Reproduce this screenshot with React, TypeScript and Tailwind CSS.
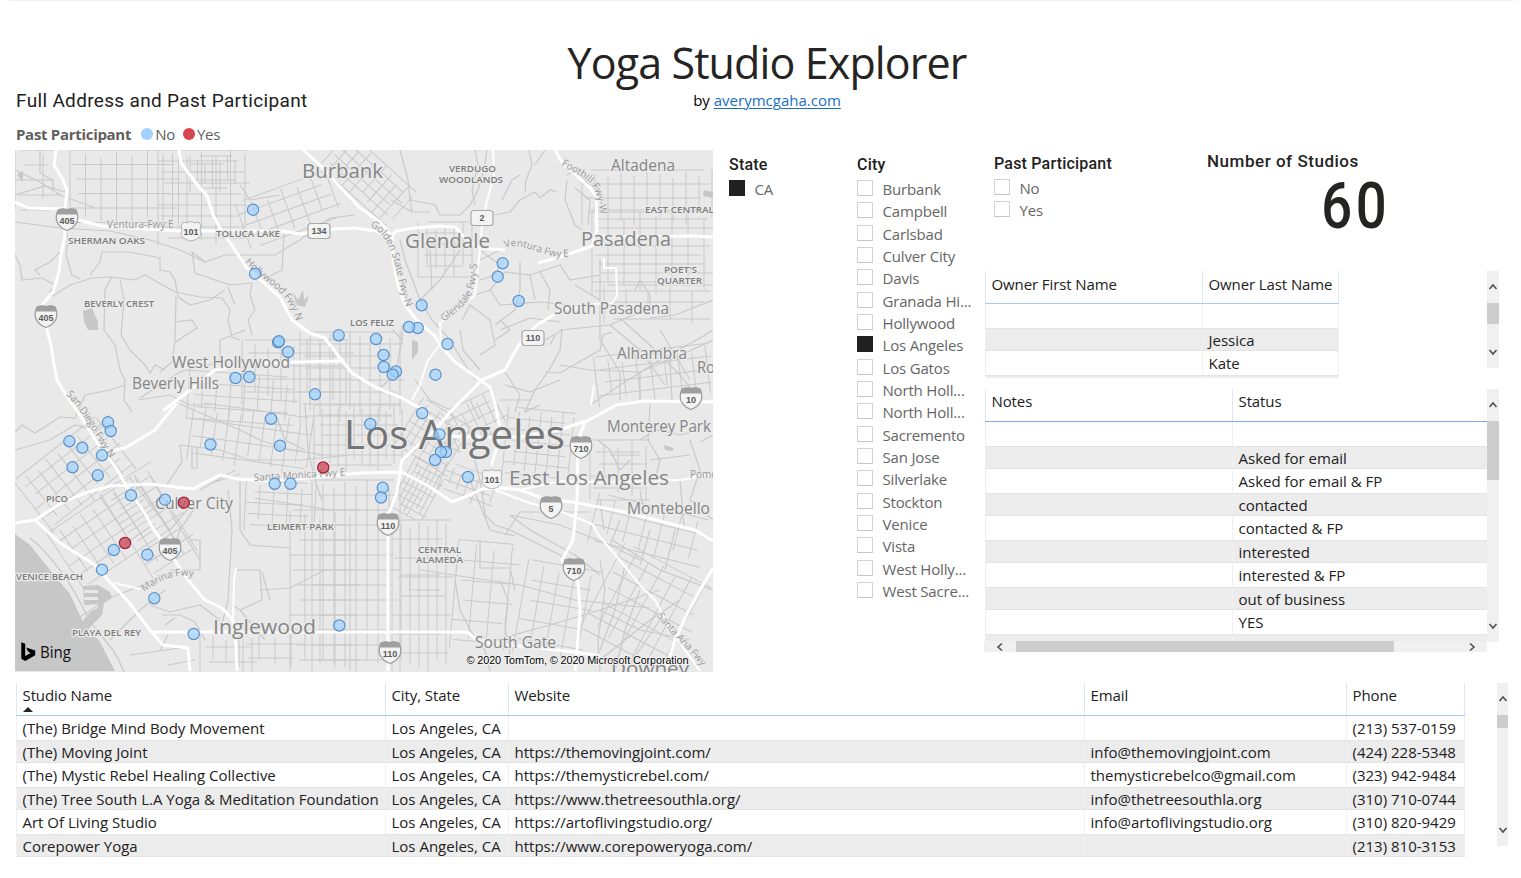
import React from "react";

type Pt = [number, number];

const UI = "font-['Open_Sans','Noto_Sans',sans-serif]";
const DIN = "font-[Roboto,sans-serif]";

/* ---------- map data ---------- */

const freeways: string[] = [
  "M56 150 54 165 62 178 67 190 65 208 65 235 61 255 59 272 53 292 42 305 47 330 51 345 54 365 57 380 66 395 78 412 100 447 115 466 127 487 145 514 154 530 170 552 182 572 198 592 205 600 222 608 233 620 236 645 237 671",
  "M15 202 28 208 65 209 M78 220 102 226 178 231 230 231 282 231 300 234 335 229 355 228",
  "M179 150 181 163 195 182 207 196 213 215 220 228 235 250 247 268 280 297 292 320 310 333 325 338 340 358 352 373 375 387 400 397 420 408 432 420 444 436 470 437 520 437 560 430 585 421",
  "M303 150 320 165 345 192 360 208 380 222 392 236 393 260 398 285 405 305 418 322 435 336 440 345 455 362 480 380 490 387 495 403 500 428 496 450 491 466",
  "M355 228 375 231 392 236 396 231 415 228 440 226 455 227 464 237 480 248 505 250 M538 263 560 257 592 246 597 230",
  "M713 402 645 401 616 405 600 414 585 422 578 440 577 500 573 540 562 560 578 582 580 610 578 640 575 671",
  "M388 671 388 515 397 492 400 472 402 460 415 448 435 430 450 412 465 397 482 380 505 370 513 355 522 340 537 325 555 314 570 306",
  "M15 523 35 520 60 504 85 493 110 486 150 484 193 489 202 484 220 475 238 479 270 481 340 475 360 473 402 472 430 487 452 502 472 494 482 489 500 488 520 490 545 499 572 502 625 512 660 521 695 530 713 541",
  "M150 632H467L480 642 520 646 575 652 600 656",
  "M713 568 700 590 688 612 675 640 665 671",
  "M35 520 60 543 95 565 110 582 127 600 150 630 163 645 188 648 190 671",
  "M163 411 190 390 215 370 250 363 342 361",
  "M105 452 125 448 155 430 176 404",
  "M600 236 640 237 690 236 713 237",
  "M555 150 562 162 590 188 596 196 597 232",
];

const thinFreeways: string[] = [
  "M493 150 494 175 486 205 482 225 480 250 477 275 475 295 460 308 440 323 441 343 427 362 420 385 412 400",
  "M490 485 520 490 560 481 600 482 680 480 713 474",
  "M495 490 530 503 565 513 592 524 600 537 618 558 640 585 655 600 672 632 700 671",
  "M604 258V268H616L617 296 612 303 595 304 570 310",
  "M115 583 140 589",
  "M591 405 594 385 M700 402 713 401",
  "M233 620 234 580 236 568",
];

/* Local streets, hand-placed where they curve */
const streets: string[] = [
  "M15 170 40 182 60 195 95 208 M15 195 45 186 65 192 M40 150V173L52 180 54 190",
  "M15 222 60 228 110 231 150 240 180 250 205 262 225 255 275 255 300 240 330 218 355 215",
  "M15 255 20 265 22 280 42 278 55 285 50 292 53 296 70 285 92 278 110 277 135 280 145 275 175 292 200 297 222 298 230 310 228 320 232 337 240 340",
  "M65 225 68 240 66 255 72 275 80 279 M40 275 35 270 50 262 60 252",
  "M90 275 100 262 102 252 128 252 140 254 160 258 160 270 170 272 175 280 178 297 190 305 210 300 225 290",
  "M112 277 105 290 104 330 115 345 120 370 125 380 124 400 132 412 M120 280 124 300 121 335 130 350 145 365 150 373 155 365 165 370",
  "M176 297 175 340 172 362 160 372 M175 322 192 320 197 328 183 337 176 342",
  "M205 262 192 252 195 273 215 280 230 285 252 283 M252 283 250 295 255 310 248 320 252 335 M228 287 235 305",
  "M15 432 22 425 35 433 60 417 75 418 85 395 110 390 125 385 M15 450 50 440 75 425 95 430 110 415",
  "M220 340 245 330 M220 340V362L180 372 140 398 M138 400 170 395 190 405 210 405",
  "M284 234 282 270 270 276 M240 185 250 200 280 195",
  "M180 404 205 415 240 430 260 440 290 450 325 455 M180 445 220 450 250 460 300 460 350 455",
  "M180 445 182 462 165 487 M192 447V468H197V447",
  "M275 412 285 440 305 450 M305 404 308 450 315 480 322 500",
  "M228 490 232 530 228 600 220 632 M240 482 240 530 250 545 290 548 M255 498 330 510",
  "M200 500 180 530 175 545 M195 500 170 530 M200 490 235 470 M215 482 240 474",
  "M150 475 175 520 200 560 M130 478 162 520 182 552 M190 540H200V570H170",
  "M75 620 110 598 150 582 175 572 M110 640 140 610 165 590 M130 655 180 648",
  "M162 615H180L195 622 205 640 M165 625 175 618 M168 665 195 660 M160 650 168 635 M150 605 170 612 200 605 220 620",
  "M235 570H260L262 600 240 610 232 605 M260 590 290 588 325 570 M240 610 265 640 M262 572 270 600",
  "M400 150 408 180 410 200 412 212 M391 200 412 212 430 212 M410 200 435 205 440 215 460 215 470 205 478 190",
  "M475 150 478 165 472 190 475 205 M487 150 484 170 478 190 M494 215 510 212 520 200 535 192 540 198 550 190 557 192",
  "M529 150 532 165 526 180 525 192 M545 150 535 165 M502 200 512 180 520 175",
  "M567 180 565 200 575 225 582 230 M575 188 590 200 588 225 M567 175 578 168 590 188",
  "M400 240 405 260 420 300 432 320 450 340 462 360 475 380 M420 300 440 280 460 250 M430 250 432 290",
  "M480 250 500 265 495 275 480 280 M475 295 490 290 505 272 530 275 560 265 570 280 600 275",
  "M490 290 500 305 540 302 570 305 M520 262V290L515 310 495 325 M540 272 550 290 548 310",
  "M462 320 470 305 490 320 495 345 480 355 M460 330 463 350 480 370 M495 340 510 330 500 320",
  "M545 340 562 330 560 350 548 372 M550 345 555 335 M545 372 560 373 600 350 603 335 612 332 M547 373 535 390 525 412 540 405",
  "M560 365 590 370 640 372 670 360 713 340 M640 312 610 325 M635 290 640 280 650 295 650 305 640 308",
  "M620 318 650 345 680 375 700 400 M610 325 640 350 665 385 M590 405 620 385 660 360 700 338 713 330",
  "M660 330 690 380 M713 300 675 315 650 318",
  "M393 330 402 340 395 375 380 388 400 395 M402 325V345 M415 380 430 400 450 410",
  "M472 450 480 480 485 515 495 525 510 530 M505 535 520 512 590 512 M510 515 530 530 575 555 600 575",
  "M510 515 560 525 610 545 640 560 M510 530 560 555 570 565 M440 575H400 M470 480 490 530 515 536",
  "M420 570 520 585 575 600 650 608 M410 575V590H440 M480 540V568H510L515 590 M495 640 550 625 600 610 660 590",
  "M455 580 460 610 470 630 485 650 490 671 M510 655 505 625 508 600 500 580",
  "M600 560 605 590 598 640 600 671 M625 565 615 610 600 650 M640 590 625 630 615 671",
  "M612 540 660 570 713 590 M620 520 610 545 M650 530 640 565 M675 530 665 570",
  "M600 610 640 630 690 640 M600 660 650 620 680 600 M625 671 660 620",
  "M598 440 610 450 620 470 630 460 M650 405 648 440 660 460 655 480 M690 440 700 470 690 500 713 520 M713 435 700 442",
  "M640 440 655 430 680 435 700 430",
  "M500 330 530 318 560 322 M530 275 535 300 M560 330 610 325 M600 260V340L620 372V400 M575 285 600 300 M480 260 500 250",
  "M505 385 530 392 560 380 M500 400H530 M505 372 520 395 515 412 M470 400 480 420 M640 372 640 400 M670 360 672 400",
  "M600 500 604 530 M640 490 644 515 M680 480 684 526 M650 460 690 455 M610 455H640",
];

const water = [
  "M15 534 30 545 50 570 70 594 82 620 100 642 115 671H15Z",
  "M83 586 98 585V590H84V593H98V597H84V600H98V604L84 605 M98 585 110 592 112 598 104 603 102 615 92 625 88 630 82 622 90 612 98 608Z",
  "M83 311 92 308 98 322 98 330 88 330 84 322Z",
  "M293 292 298 300 303 290 304 300 309 295 305 307 296 305Z",
  "M412 340 418 342 418 352 412 360Z",
  "M704 190 713 192V198L703 196Z M664 445 674 448 672 451 665 450Z",
  "M17 175 23 171V182Z",
];

interface GridSpec {
  x: number; y: number; w: number; h: number; dx: number; dy: number; rot?: number;
}
const grids: GridSpec[] = [
  { x: 70, y: 150, w: 110, h: 79, dx: 15.5, dy: 14.5 },
  { x: 15, y: 150, w: 45, h: 60, dx: 28, dy: 15 },
  { x: 158, y: 150, w: 92, h: 95, dx: 14.5, dy: 11 },
  { x: 190, y: 156, w: 46, h: 36, dx: 7.5, dy: 8 },
  { x: 240, y: 185, w: 100, h: 48, dx: 16, dy: 12, rot: -20 },
  { x: 322, y: 156, w: 90, h: 48, dx: 10, dy: 9, rot: 42 },
  { x: 418, y: 222, w: 54, h: 55, dx: 9, dy: 11 },
  { x: 582, y: 170, w: 131, h: 55, dx: 13, dy: 14 },
  { x: 592, y: 210, w: 121, h: 84, dx: 16, dy: 9 },
  { x: 604, y: 285, w: 109, h: 38, dx: 22, dy: 17 },
  { x: 596, y: 350, w: 117, h: 50, dx: 14, dy: 13, rot: -7 },
  { x: 242, y: 340, w: 112, h: 64, dx: 13, dy: 13 },
  { x: 300, y: 332, w: 104, h: 90, dx: 10, dy: 12 },
  { x: 188, y: 374, w: 110, h: 48, dx: 14, dy: 12, rot: 4 },
  { x: 190, y: 410, w: 124, h: 58, dx: 12, dy: 17, rot: 8 },
  { x: 314, y: 405, w: 90, h: 66, dx: 8, dy: 10 },
  { x: 404, y: 410, w: 62, h: 56, dx: 7, dy: 9, rot: 32 },
  { x: 400, y: 462, w: 38, h: 58, dx: 5, dy: 7, rot: 28 },
  { x: 448, y: 398, w: 60, h: 44, dx: 9, dy: 10, rot: -25 },
  { x: 505, y: 410, w: 70, h: 70, dx: 11, dy: 11, rot: 6 },
  { x: 440, y: 470, w: 58, h: 32, dx: 9, dy: 9, rot: 20 },
  { x: 245, y: 482, w: 70, h: 50, dx: 14, dy: 11, rot: 3 },
  { x: 312, y: 480, w: 88, h: 191, dx: 11, dy: 15 },
  { x: 290, y: 510, w: 70, h: 161, dx: 15, dy: 15 },
  { x: 392, y: 520, w: 62, h: 151, dx: 9, dy: 19 },
  { x: 454, y: 542, w: 62, h: 110, dx: 18, dy: 20, rot: 5 },
  { x: 520, y: 565, w: 75, h: 95, dx: 16, dy: 20, rot: 10 },
  { x: 590, y: 440, w: 60, h: 60, dx: 14, dy: 12 },
  { x: 592, y: 506, w: 115, h: 50, dx: 17, dy: 16, rot: 14 },
  { x: 596, y: 560, w: 100, h: 100, dx: 15, dy: 16, rot: 28 },
  { x: 22, y: 440, w: 110, h: 66, dx: 13, dy: 12, rot: -38 },
  { x: 56, y: 498, w: 108, h: 66, dx: 13, dy: 13, rot: -34 },
  { x: 122, y: 470, w: 60, h: 100, dx: 13, dy: 12, rot: -32 },
  { x: 243, y: 630, w: 60, h: 41, dx: 16, dy: 14 },
  { x: 200, y: 632, w: 60, h: 39, dx: 13, dy: 15 },
];

function gridPath(g: GridSpec): string {
  let d = "";
  let k = 0;
  for (let x = g.x; x <= g.x + g.w; x += g.dx) {
    const cut = (k * 7) % 5;
    d += `M${x} ${g.y + cut * 2}V${g.y + g.h - ((k * 3) % 4) * 4}`;
    k++;
  }
  for (let y = g.y; y <= g.y + g.h; y += g.dy) {
    d += `M${g.x + ((k * 5) % 4) * 3} ${y}H${g.x + g.w - ((k * 3) % 5) * 3}`;
    k++;
  }
  return d;
}

interface Label { t: string; x: number; y: number; s: number; w: number; }
const places: Label[] = [
  { t: "Burbank", x: 302, y: 178, s: 20.5, w: 81 },
  { t: "Altadena", x: 611, y: 171, s: 15.5, w: 64 },
  { t: "Glendale", x: 405, y: 248, s: 20.5, w: 85 },
  { t: "Pasadena", x: 581, y: 246, s: 20.5, w: 90 },
  { t: "South Pasadena", x: 554, y: 314, s: 15.5, w: 115 },
  { t: "Alhambra", x: 617, y: 359, s: 15.5, w: 70 },
  { t: "Ro", x: 697, y: 373, s: 15.5, w: 18 },
  { t: "West Hollywood", x: 172, y: 368, s: 15.5, w: 118 },
  { t: "Beverly Hills", x: 132, y: 389, s: 15.5, w: 87 },
  { t: "Monterey Park", x: 607, y: 432, s: 15.5, w: 104 },
  { t: "East Los Angeles", x: 509, y: 485, s: 20, w: 160 },
  { t: "Montebello", x: 627, y: 514, s: 15.5, w: 83 },
  { t: "Culver City", x: 155, y: 509, s: 15.5, w: 78 },
  { t: "Inglewood", x: 213, y: 634, s: 20.5, w: 103 },
  { t: "South Gate", x: 475, y: 648, s: 15.5, w: 81 },
  { t: "Downey", x: 611, y: 675, s: 19, w: 78 },
];
const areas: Label[] = [
  { t: "VERDUGO", x: 449, y: 172, s: 9.2, w: 47 },
  { t: "WOODLANDS", x: 439, y: 183, s: 9.2, w: 64 },
  { t: "SHERMAN OAKS", x: 68, y: 244, s: 9.2, w: 77 },
  { t: "TOLUCA LAKE", x: 216, y: 237, s: 9.2, w: 64 },
  { t: "EAST CENTRAL", x: 645, y: 213, s: 9.2, w: 69 },
  { t: "POET'S", x: 664, y: 273, s: 9.2, w: 33 },
  { t: "QUARTER", x: 657, y: 284, s: 9.2, w: 45 },
  { t: "BEVERLY CREST", x: 84, y: 307, s: 9.2, w: 70 },
  { t: "LOS FELIZ", x: 350, y: 326, s: 9.2, w: 44 },
  { t: "PICO", x: 46, y: 502, s: 9.2, w: 22 },
  { t: "LEIMERT PARK", x: 267, y: 530, s: 9.2, w: 67 },
  { t: "CENTRAL", x: 418, y: 553, s: 9.2, w: 43 },
  { t: "ALAMEDA", x: 416, y: 563, s: 9.2, w: 47 },
  { t: "VENICE BEACH", x: 16, y: 580, s: 9.2, w: 67 },
  { t: "PLAYA DEL REY", x: 72, y: 636, s: 9.2, w: 69 },
];

const roadNames: { t: string; d: string; id: string }[] = [
  { id: "r1", t: "Ventura-Fwy E", d: "M107 228H190" },
  { id: "r2", t: "Hollywood Fwy N", d: "M245 262C262 282 290 290 297 324" },
  { id: "r3", t: "Golden State Fwy-N", d: "M370 226C398 240 394 280 408 310" },
  { id: "r4", t: "Ventura Fwy E", d: "M505 248C525 240 545 262 572 256" },
  { id: "r5", t: "Glendale Fwy-S", d: "M444 322C462 306 476 304 477 262" },
  { id: "r6", t: "Foothill Fwy-W", d: "M561 165C590 182 596 180 601 218" },
  { id: "r7", t: "San Diego Fwy N", d: "M66 395C82 408 96 440 116 466" },
  { id: "r8", t: "Santa Monica Fwy E", d: "M254 481L352 475" },
  { id: "r9", t: "Marina Fwy", d: "M144 592C160 580 175 573 196 577" },
  { id: "r10", t: "Santa Ana Fwy", d: "M657 616C672 636 690 650 706 672" },
  { id: "r11", t: "Pomona", d: "M690 478H730" },
];

const interstates: [number, number, string][] = [
  [67, 219, "405"], [46, 316, "405"], [170, 549, "405"], [691, 398, "10"],
  [581, 447, "710"], [574, 569, "710"], [551, 507, "5"], [388, 524, "110"], [390, 652, "110"],
];
const stateRoutes: [number, number, string][] = [
  [319, 231, "134"], [482, 218, "2"], [533, 338, "110"],
];
const usRoutes: [number, number, string][] = [[191, 231, "101"], [492, 479, "101"]];

const noDots: Pt[] = [
  [253, 209.7], [255, 273.7], [502.7, 263.3], [497.7, 276.7], [518.7, 301], [421.7, 305.3],
  [417.7, 328], [409, 327], [376, 339], [338.7, 335.3], [447.5, 344], [383.5, 355], [383.7, 367],
  [396, 371.5], [392.7, 374.7], [435.5, 374.7], [278, 342.3], [279, 341.3], [288, 352], [235.5, 378],
  [249.3, 377], [315, 394.3], [271, 418.8], [210.5, 444.5], [280, 445.7], [108, 422.3], [110.7, 431],
  [69.3, 441.3], [82.3, 447.7], [102, 455.3], [72.5, 467.3], [97.8, 475.3], [131, 495.3], [165, 499.7],
  [274.7, 483.8], [290.5, 483.8], [370.3, 424], [422.2, 413.2], [439.5, 434.5], [446, 452], [441, 452],
  [435, 460], [468, 477], [382.7, 487.7], [381, 497.5], [113.8, 550], [147.3, 554.7], [102, 569.7],
  [154.3, 598.3], [193.7, 634], [339.3, 625.5],
];
const yesDots: Pt[] = [[323.2, 467.5], [183.8, 502.7], [125, 543]];

function StudioMap() {
  return (
    <svg className="block h-[522px] w-[698px] shrink-0" viewBox="15 150 698 522">
      <rect x="15" y="150" width="698" height="522" fill="#e9e9e9" />
      <g fill="none" stroke="#c9c9c9" strokeWidth="1">
        {grids.map((g, i) => (
          <path key={i} d={gridPath(g)} transform={g.rot ? `rotate(${g.rot} ${g.x + g.w / 2} ${g.y + g.h / 2})` : undefined} />
        ))}
        <g strokeWidth="1.2">
          {streets.map((d, i) => <path key={i} d={d} />)}
        </g>
      </g>
      <g fill="#c7c7c7">{water.map((d, i) => <path key={i} d={d} />)}</g>
      <path d="M30 538C52 555 74 588 85 612S112 640 124 672" fill="none" stroke="#c9c9c9" strokeWidth="1.3" />
      <g fill="none" stroke="#fff" strokeLinejoin="round">
        <g strokeWidth="3">{freeways.map((d, i) => <path key={i} d={d} />)}</g>
        <g strokeWidth="2">{thinFreeways.map((d, i) => <path key={i} d={d} />)}</g>
      </g>

      <g className="font-['Open_Sans','Noto_Sans',sans-serif]" stroke="#ebebeb" strokeWidth="2.5" strokeLinejoin="round" paintOrder="stroke">
        <g fill="#999" fontSize="10" strokeWidth="1.5">
          {roadNames.map((r) => (
            <React.Fragment key={r.id}>
              <path id={r.id} d={r.d} fill="none" stroke="none" />
              <text><textPath href={`#${r.id}`}>{r.t}</textPath></text>
            </React.Fragment>
          ))}
        </g>
        <g fill="#858585">
          {places.map((l) => (
            <text key={l.t} x={l.x} y={l.y} fontSize={l.s} textLength={l.w} lengthAdjust="spacingAndGlyphs">{l.t}</text>
          ))}
        </g>
        <g fill="#7c7c7c" fontWeight="600">
          {areas.map((l) => (
            <text key={l.t} x={l.x} y={l.y} fontSize={l.s} textLength={l.w} lengthAdjust="spacingAndGlyphs">{l.t}</text>
          ))}
        </g>
        <text x="344" y="449" fontSize="40" fill="#757575" textLength="221" lengthAdjust="spacingAndGlyphs">Los Angeles</text>
      </g>

      <g className="font-['Liberation_Sans',sans-serif]" fontSize="9" fontWeight="700" fill="#5a5a5a" textAnchor="middle">
        {interstates.map(([x, y, t], i) => (
          <g key={i}>
            <path d={`M${x - 9} ${y - 9}Q${x - 4.5} ${y - 11} ${x} ${y - 9.5}Q${x + 4.5} ${y - 11} ${x + 9} ${y - 9}Q${x + 12} ${y - 2} ${x + 10} ${y + 3}Q${x + 7} ${y + 9} ${x} ${y + 11.5}Q${x - 7} ${y + 9} ${x - 10} ${y + 3}Q${x - 12} ${y - 2} ${x - 9} ${y - 9}Z`} fill="#f3f3f3" stroke="#9b9b9b" strokeWidth="1.3" />
            <path d={`M${x - 9} ${y - 9.5}Q${x - 4.5} ${y - 11} ${x} ${y - 9.5}Q${x + 4.5} ${y - 11} ${x + 9} ${y - 9.5}L${x + 10.5} ${y - 4.5}H${x - 10.5}Z`} fill="#9f9f9f" />
            <text x={x} y={y + 4.5}>{t}</text>
          </g>
        ))}
        {stateRoutes.map(([x, y, t], i) => (
          <g key={i}>
            <rect x={x - 11} y={y - 7.5} width="22" height="15" rx="3" fill="#f3f3f3" stroke="#a8a8a8" strokeWidth="1.2" />
            <text x={x} y={y + 3.3}>{t}</text>
          </g>
        ))}
        {usRoutes.map(([x, y, t], i) => (
          <g key={i}>
            <path d={`M${x - 8} ${y - 9}Q${x - 4} ${y - 7} ${x} ${y - 9.5}Q${x + 4} ${y - 7} ${x + 8} ${y - 9}L${x + 10} ${y - 5}Q${x + 8} ${y - 1} ${x + 10} ${y + 2}Q${x + 10} ${y + 8} ${x} ${y + 10}Q${x - 10} ${y + 8} ${x - 10} ${y + 2}Q${x - 8} ${y - 1} ${x - 10} ${y - 5}Z`} fill="#f3f3f3" stroke="#b5b5b5" strokeWidth="1" />
            <text x={x} y={y + 4}>{t}</text>
          </g>
        ))}
      </g>

      <g fill="#a0d1ff" fillOpacity="0.7" stroke="#5b93c9" strokeWidth="1.2">
        {noDots.map(([x, y], i) => <circle key={i} cx={x} cy={y} r="5.6" />)}
      </g>
      <g fill="#c9505f" fillOpacity="0.8" stroke="#a11f30" strokeWidth="1.2">
        {yesDots.map(([x, y], i) => <circle key={i} cx={x} cy={y} r="5.6" />)}
      </g>

      <path d="M21.3 642.3 25.2 643.7V656L30.6 652.9 28 651.6 26.3 647.5 35.2 650.6V655.2L25.2 661 21.3 658.8Z" fill="#000" />
      <text x="40" y="658" fontSize="15.5" textLength="31" lengthAdjust="spacingAndGlyphs" className="font-['Open_Sans','Noto_Sans',sans-serif]" fill="#111">Bing</text>
      <text x="466.500" y="664" fontSize="11" textLength="222" className="font-['Liberation_Sans',sans-serif]" fill="#000" stroke="#f2f2f2" strokeWidth="2" paintOrder="stroke">© 2020 TomTom, © 2020 Microsoft Corporation</text>
    </svg>
  );
}

/* ---------- slicers ---------- */

function Check({ label, on }: { label: string; on?: boolean }) {
  return (
    <div className="flex h-[22.33px] items-center">
      <span className={on ? "mb-[2px] h-4 w-4 shrink-0 bg-[#212121]" : "mb-[2px] h-4 w-4 shrink-0 border border-[#d5d2d6] border-b-[#c4c4c4] bg-white"} />
      <span className="ml-[9.5px] whitespace-nowrap text-[15px] leading-[22px] tracking-[-0.17px] text-[#666]">{label}</span>
    </div>
  );
}

function SlicerTitle({ children }: { children: string }) {
  return <div className={`${DIN} h-[28px] whitespace-nowrap pt-[5px] text-[16px] font-medium leading-[20px] tracking-[0.2px] text-[#212121]`}>{children}</div>;
}

const cities = [
  "Burbank", "Campbell", "Carlsbad", "Culver City", "Davis", "Granada Hi...", "Hollywood", "Los Angeles",
  "Los Gatos", "North Holl...", "North Holl...", "Sacremento", "San Jose", "Silverlake", "Stockton",
  "Venice", "Vista", "West Holly...", "West Sacre...",
];

/* ---------- tables ---------- */

function Chevron({ dir }: { dir: "up" | "down" | "left" | "right" }) {
  const d = { up: "M1.500 7 5 3 8.500 7", down: "M1.500 3 5 7 8.500 3", left: "M7 1.500 3 5 7 8.500", right: "M3 1.500 7 5 3 8.500" }[dir];
  return (
    <svg className="h-[10px] w-[10px] shrink-0" viewBox="0 0 10 10">
      <path d={d} fill="none" stroke="#505050" strokeWidth="1.6" />
    </svg>
  );
}

interface Col { title: string; cls: string; sorted?: boolean; }

function Table({ cols, rows, line, head }: { cols: Col[]; rows: string[][]; line: string; head: string }) {
  return (
    <div className="text-[15px] text-[#212121]">
      <div className={`flex h-[33px] border-b ${line}`}>
        {cols.map((c) => (
          <div key={c.title} className={`${c.cls} ${head} shrink-0 whitespace-nowrap border-l border-[#dbe6fb] pl-[5.5px] leading-[22px] tracking-[-0.1px]`}>
            {c.title}
            {c.sorted && (
              <svg className="mt-px block h-[5px] w-[10px]" viewBox="0 0 10 5"><path d="M0 5 5 0 10 5Z" fill="#212121" /></svg>
            )}
          </div>
        ))}
      </div>
      {rows.map((r, i) => (
        <div key={i} className={i % 2 ? "flex h-[23.5px] border-y border-[#e4e4e4] bg-[#ececec]" : "flex h-[23.5px] bg-white"}>
          {r.map((v, j) => (
            <div key={j} className={`${cols[j].cls} ${i % 2 ? "leading-[22px]" : "leading-[24px]"} shrink-0 whitespace-nowrap border-l border-[#f0f0f0] pl-[5.5px]`}>{v}</div>
          ))}
        </div>
      ))}
    </div>
  );
}

const studios = [
  ["(The) Bridge Mind Body Movement", "Los Angeles, CA", "", "", "(213) 537-0159"],
  ["(The) Moving Joint", "Los Angeles, CA", "https://themovingjoint.com/", "info@themovingjoint.com", "(424) 228-5348"],
  ["(The) Mystic Rebel Healing Collective", "Los Angeles, CA", "https://themysticrebel.com/", "themysticrebelco@gmail.com", "(323) 942-9484"],
  ["(The) Tree South L.A Yoga & Meditation Foundation", "Los Angeles, CA", "https://www.thetreesouthla.org/", "info@thetreesouthla.org", "(310) 710-0744"],
  ["Art Of Living Studio", "Los Angeles, CA", "https://artoflivingstudio.org/", "info@artoflivingstudio.org", "(310) 820-9429"],
  ["Corepower Yoga", "Los Angeles, CA", "https://www.corepoweryoga.com/", "", "(213) 810-3153"],
];

const statuses = ["", "Asked for email", "Asked for email & FP", "contacted", "contacted & FP", "interested", "interested & FP", "out of business", "YES"];

export default function App() {
  return (
    <div className={`${UI} h-[878px] w-[1521px] overflow-hidden bg-white`}>
      <div className="ml-[9px] mr-[7px] h-px bg-[#f0f0f0]" />
      <header className="flex h-[149px]">
        <div className="w-[552px] shrink-0 pl-[16px] pt-[88px]">
          <h2 className={`${DIN} text-[19px] leading-[24px] tracking-[0.33px] text-[#212121]`}>Full Address and Past Participant</h2>
          <div className="mt-[10px] flex h-[22px] items-center text-[15px] tracking-[-0.25px] text-[#605e5c]">
            <span className="font-bold tracking-[-0.3px]">Past Participant</span>
            <span className="ml-[10px] h-3 w-3 rounded-full bg-[#a0d1ff]" />
            <span className="ml-[2px]">No</span>
            <span className="ml-[8px] h-3 w-3 rounded-full bg-[#d64550]" />
            <span className="ml-[2px]">Yes</span>
          </div>
        </div>
        <div className="w-[430px] shrink-0 pt-[32px] text-center">
          <h1 className="whitespace-nowrap text-[43px] leading-[60px] tracking-[-0.88px] text-[#252423]">Yoga Studio Explorer</h1>
          <p className="-mt-[4px] text-[15px] leading-[22px] text-black">
            by <a className="text-[#1a6fc4] underline decoration-1 underline-offset-2">averymcgaha.com</a>
          </p>
        </div>
      </header>

      <main className="flex h-[533px] pl-[15px]">
        <StudioMap />
        <section className="ml-[16px] w-[128px] shrink-0">
          <SlicerTitle>State</SlicerTitle>
          <Check label="CA" on />
        </section>
        <section className="w-[128px] shrink-0">
          <SlicerTitle>City</SlicerTitle>
          {cities.map((c, i) => <Check key={i} label={c} on={c === "Los Angeles"} />)}
        </section>
        <div className="w-[515px] shrink-0">
          <div className="flex h-[121px]">
            <section className="-mt-px w-[222px] pl-[9px]">
              <SlicerTitle>Past Participant</SlicerTitle>
              <Check label="No" />
              <Check label="Yes" />
            </section>
            <section className={`${DIN} w-[290px] text-[#252423]`}>
              <div className="whitespace-nowrap pt-px text-[17px] font-medium leading-[20px] tracking-[0.53px]">Number of Studios</div>
              <div className="pl-[8px] pt-[3px] text-center text-[64px] font-medium leading-[66px] tracking-[4.5px]">
                <span className="inline-block scale-x-[0.85]">60</span>
              </div>
            </section>
          </div>
          <div className="flex h-[107px] justify-between overflow-hidden">
            <div className="w-[354px] overflow-hidden">
              <Table
                line="border-[#a9c8f5]"
                head="pt-[2px]"
                cols={[{ title: "Owner First Name", cls: "w-[217px]" }, { title: "Owner Last Name", cls: "w-[137px] border-r" }]}
                rows={[["", ""], ["", "Jessica"], ["", "Kate"], ["", ""]]}
              />
            </div>
            <div className="mr-px flex h-[97px] w-[12px] flex-col items-center bg-[#f0f0f0] pt-[11px]">
              <Chevron dir="up" />
              <div className="mt-[11px] h-[21px] w-full bg-[#cdcdcd]" />
              <div className="mt-[23px]"><Chevron dir="down" /></div>
            </div>
          </div>
          <div className="mt-[11px] flex h-[252px]">
            <div className="w-[502px] overflow-hidden">
              <Table
                line="border-[#7ba9ea]"
                head="pt-px"
                cols={[{ title: "Notes", cls: "w-[247px]" }, { title: "Status", cls: "w-[255px]" }]}
                rows={[...statuses.map((s) => ["", s]), ["each week", "contacted"]]}
              />
            </div>
            <div className="flex h-[253px] w-[12px] flex-col items-center bg-[#f0f0f0] pt-[11px]">
              <Chevron dir="up" />
              <div className="mt-[11px] h-[59px] w-full bg-[#cdcdcd]" />
              <div className="mt-[141px]"><Chevron dir="down" /></div>
            </div>
          </div>
          <div className="-ml-px flex h-[11px] w-[503px] items-center">
            <div className="flex h-[11px] w-[32px] shrink-0 items-center bg-[#f0f0f0] pl-[11px]"><Chevron dir="left" /></div>
            <div className="h-[11px] w-[378px] shrink-0 bg-[#cdcdcd]" />
            <div className="flex h-[11px] w-[93px] shrink-0 items-center bg-[#f0f0f0] pl-[73px]"><Chevron dir="right" /></div>
          </div>
        </div>
      </main>

      <section className="flex h-[174px] pl-[16px]">
        <div className="w-[1449px] shrink-0">
          <Table
            line="border-[#a9c8f5]"
            head="pt-px"
            cols={[
              { title: "Studio Name", cls: "w-[369px]", sorted: true },
              { title: "City, State", cls: "w-[123px]" },
              { title: "Website", cls: "w-[576px]" },
              { title: "Email", cls: "w-[262px]" },
              { title: "Phone", cls: "w-[119px] border-r" },
            ]}
            rows={studios}
          />
        </div>
        <div className="ml-[32px] flex h-[163px] w-[11px] shrink-0 flex-col items-center bg-[#f0f0f0] pt-[11px]">
          <Chevron dir="up" />
          <div className="mt-[11px] h-[13px] w-full bg-[#cdcdcd]" />
          <div className="mt-[97px]"><Chevron dir="down" /></div>
        </div>
      </section>
    </div>
  );
}
